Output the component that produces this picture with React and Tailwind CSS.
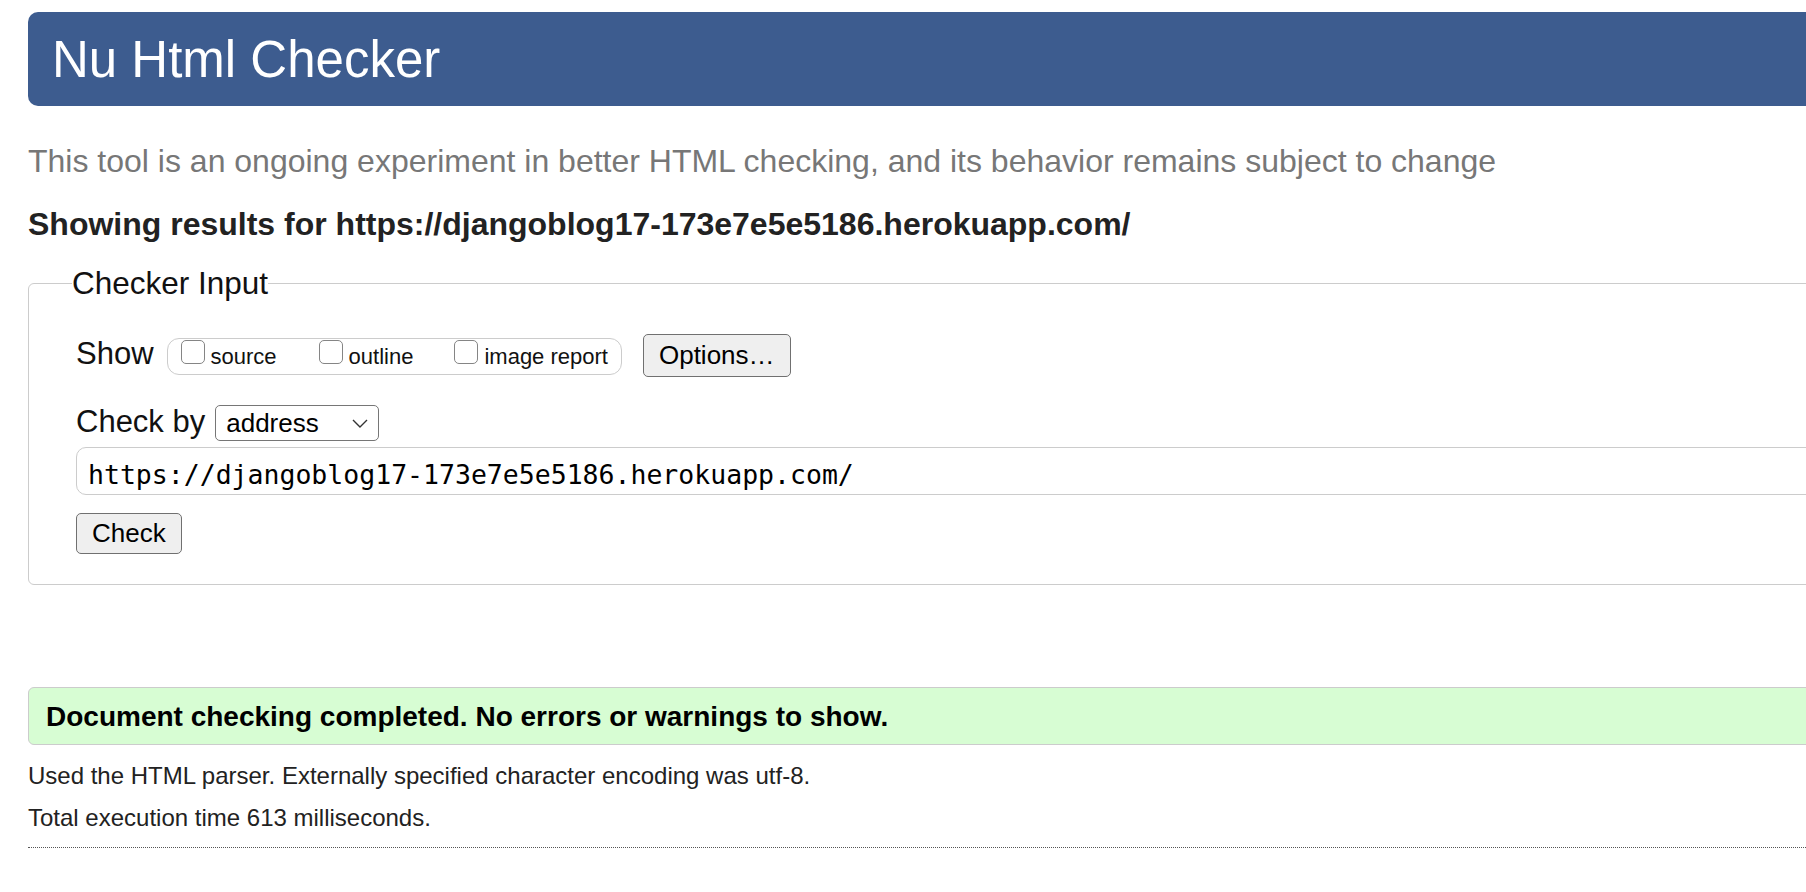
import React from "react";

const sans = { fontFamily: '"Liberation Sans", Arial, Helvetica, sans-serif' };

function Checkbox({ label, className = "" }) {
  return (
    <label className={`flex items-baseline ${className}`}>
      <span className="inline-block w-[24px] h-[24px] rounded-[5px] border-[1.5px] border-[#858585] bg-white" />
      <span className="ml-[6px] text-[22px] leading-[22px] text-[#111]">{label}</span>
    </label>
  );
}

function NativeButton({ children, className = "" }) {
  return (
    <button
      type="button"
      className={`flex items-center px-[15px] bg-[#efefef] border-[1.5px] border-[#707070] rounded-[5px] text-[26px] text-black ${className}`}
    >
      {children}
    </button>
  );
}

export default function App() {
  return (
    <div className="w-[1806px] h-[892px] overflow-hidden bg-white" style={sans}>
      <div className="w-[2100px] pl-[28px] pt-[12px]">
        {/* HEADER */}
        <div className="h-[94px] bg-[#3d5c8f] rounded-[10px] flex items-center pl-[24px]">
          <h1 className="text-[51px] text-white font-normal leading-none">Nu Html Checker</h1>
        </div>

        <p className="mt-[35px] text-[32px] leading-[40px] text-[#777]">
          This tool is an ongoing experiment in better HTML checking, and its behavior remains subject to change
        </p>

        <h2 className="mt-[23px] text-[32px] leading-[40px] font-bold text-[#222]">
          Showing results for https://djangoblog17-173e7e5e5186.herokuapp.com/
        </h2>

        {/* CHECKER INPUT */}
        <fieldset className="mt-[19px] border border-[#cccccc] rounded-[6px] pl-[43px] pr-[43px] pt-[31px] pb-[30px]">
          <legend className="text-[31.5px] leading-[40px] text-[#111]">Checker Input</legend>

          <div className="pl-[4px]">
            <div className="flex items-baseline">
              <span className="text-[31px] leading-[32px] text-[#111]">Show</span>
              <div className="ml-[13px] h-[37px] flex items-baseline pt-[1px] pl-[13px] pr-[13px] border-[1.5px] border-[#cccccc] rounded-[12px]">
                <Checkbox label="source" />
                <Checkbox label="outline" className="ml-[42px]" />
                <Checkbox label="image report" className="ml-[41px]" />
              </div>
              <NativeButton className="ml-[21px] h-[43px]">Options…</NativeButton>
            </div>

            <div className="mt-[28px] flex items-baseline">
              <span className="text-[31px] leading-[32px] text-[#111]">Check by</span>
              <div className="ml-[10px] w-[164px] h-[36px] flex items-center justify-between pl-[10px] pr-[10px] border-[1.5px] border-[#767676] rounded-[5px] bg-white">
                <span className="text-[26px] text-black">address</span>
                <svg width="16" height="9" viewBox="0 0 16 9" className="self-center">
                  <path d="M1 1 L8 8 L15 1" fill="none" stroke="#333" strokeWidth="1.4" />
                </svg>
              </div>
            </div>

            <div className="mt-[6px] h-[48px] flex items-center pt-[8px] pl-[11px] border-[1.5px] border-[#cccccc] rounded-[10px]">
              <span
                className="text-[26.5px] text-black"
                style={{ fontFamily: '"DejaVu Sans Mono", Menlo, monospace' }}
              >
                https://djangoblog17-173e7e5e5186.herokuapp.com/
              </span>
            </div>

            <NativeButton className="mt-[18px] h-[41px]">Check</NativeButton>
          </div>
        </fieldset>

        {/* RESULT */}
        <div className="mt-[102px] h-[58px] flex items-center pl-[17px] pt-[1px] bg-[#d7fdd3] border-[1.5px] border-[#cccccc] rounded-[6px]">
          <p className="text-[28px] font-bold text-black">
            Document checking completed. No errors or warnings to show.
          </p>
        </div>

        <p className="mt-[17px] text-[24px] leading-[28px] text-[#222]">
          Used the HTML parser. Externally specified character encoding was utf-8.
        </p>
        <p className="mt-[14px] text-[24px] leading-[28px] text-[#222]">Total execution time 613 milliseconds.</p>

        <hr className="mt-[15px] border-0 border-t border-dotted border-[#555]" />
      </div>
    </div>
  );
}
